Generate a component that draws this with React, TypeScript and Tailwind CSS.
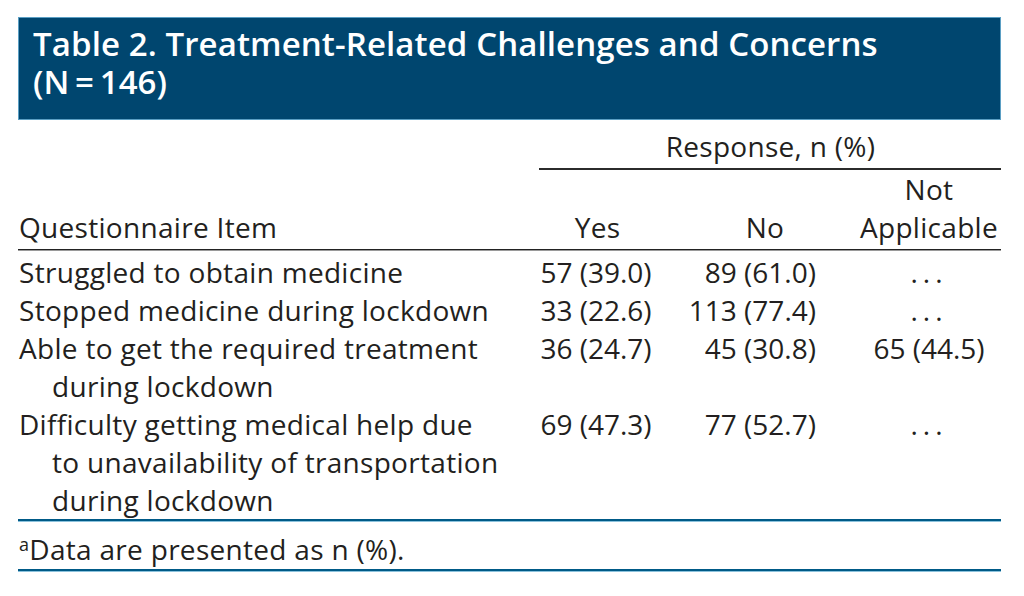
const rows = [
  { item: ["Struggled to obtain medicine"], yes: "57 (39.0)", no: "89 (61.0)", na: null },
  { item: ["Stopped medicine during lockdown"], yes: "33 (22.6)", no: "113 (77.4)", na: null },
  {
    item: ["Able to get the required treatment", "during lockdown"],
    yes: "36 (24.7)",
    no: "45 (30.8)",
    na: "65 (44.5)",
  },
  {
    item: ["Difficulty getting medical help due", "to unavailability of transportation", "during lockdown"],
    yes: "69 (47.3)",
    no: "77 (52.7)",
    na: null,
  },
];

export default function App() {
  return (
    <div className="min-h-[596px] w-[1024px] bg-white pt-[17px] font-['Open_Sans',sans-serif] text-[#231f20]">
      <div className="ml-[18px] w-[983px]">
        {/* Title bar */}
        <div className="h-[103px] border border-[#5b9fc4] bg-[#00466f] pl-[14px] pt-[7px] text-[33px] leading-[38px] font-semibold tracking-[0.1px] text-white">
          <h1>
            Table 2. Treatment-Related Challenges and Concerns
            <br />
            (N{"\u2009"}={"\u2009"}146)
          </h1>
        </div>

        <div className="grid grid-cols-[512px_135px_188px_148px] text-[28px] leading-[38px] tracking-[0.3px]">
          {/* Spanner */}
          <div className="h-[48px]" />
          <div className="col-span-3 flex h-[48px] flex-col">
            <div className="pt-[7px] pl-[10px] text-center">Response, n (%)</div>
          </div>

          <div />
          <div className="col-span-3 ml-[9px] h-[2px] bg-[#2b2b2b]" />

          {/* Column headings */}
          <div className="flex flex-col justify-end pl-[1px]">
            <div>Questionnaire Item</div>
          </div>
          <div className="flex flex-col justify-end text-center">
            <div>Yes</div>
          </div>
          <div className="flex flex-col justify-end pl-[12px] text-center">
            <div>No</div>
          </div>
          <div className="flex flex-col items-center justify-end pl-[4px] text-center">
            <div>
              Not
              <br />
              Applicable
            </div>
          </div>
        </div>

        <div className="mt-[3px] h-[1px] bg-[#222]" />
        <div className="h-[1px] bg-[#9a9a9a]" />

        <div className="grid grid-cols-[512px_135px_188px_148px] pt-[2px] text-[28px] leading-[38px] tracking-[0.3px]">
          {rows.map((r, i) => (
            <div key={i} className="contents">
              <div className="pl-[1px]">
                {r.item.map((line, j) => (
                  <div key={j} className={j > 0 ? "pl-[33px]" : ""}>
                    {line}
                  </div>
                ))}
              </div>
              <div className="pr-[3px] text-center tracking-normal">{r.yes}</div>
              <div className="pr-[37px] text-right tracking-normal">{r.no}</div>
              <div className="pl-[4px] text-center tracking-normal">
                {r.na ?? <span className="tracking-[5px]">...</span>}
              </div>
            </div>
          ))}
        </div>

        <div className="h-[2px] bg-[#005a87]" />
        <div className="h-[1px] bg-[#8cc2dc]" />

        <div className="h-[47px] pt-[8px] pl-[1px] text-[28px] leading-[38px] tracking-[0.3px]">
          <span className="relative -top-[9px] text-[18px] leading-none">a</span>Data are presented as n (%).
        </div>

        <div className="h-[2px] bg-[#005a87]" />
        <div className="h-[1px] bg-[#8cc2dc]" />
      </div>
    </div>
  );
}
